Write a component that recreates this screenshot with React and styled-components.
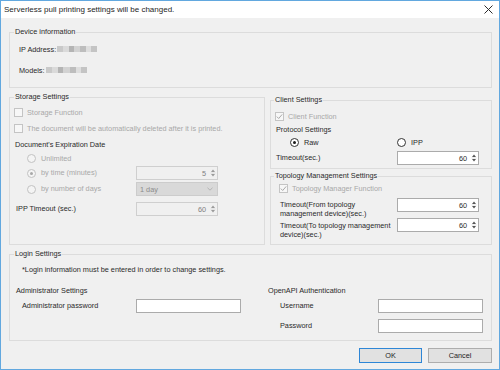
import React from "react";
import styled, { createGlobalStyle } from "styled-components";

const GlobalStyle = createGlobalStyle`
  html, body {
    margin: 0;
    padding: 0;
    background: #ffffff;
  }
  body {
    font-family: "Liberation Sans", Arial, sans-serif;
  }
`;

const Window = styled.div`
  width: 500px;
  height: 370px;
  box-sizing: border-box;
  border: 1px solid #62a8df;
  display: flex;
  flex-direction: column;
  background: #f0f0f0;
  color: #2a2a2a;
  font-family: "Liberation Sans", Arial, sans-serif;
  font-size: 7.3px;
  overflow: hidden;
`;

const TitleBar = styled.div`
  height: 17px;
  flex: none;
  background: #ffffff;
  display: flex;
  align-items: center;
  justify-content: space-between;
  padding: 0 6px 0 3px;
  font-size: 8px;
  color: #1e1e1e;
`;

const Body = styled.div`
  flex: 1;
  display: flex;
  flex-direction: column;
  padding: 9px 7px 0 8px;
`;

const Group = styled.fieldset`
  margin: ${(p) => p.$mt || 0}px 0 0;
  padding: 0;
  border: 1px solid #dcdcdc;
  min-width: 0;
  box-sizing: border-box;
  width: ${(p) => (p.$w ? `${p.$w}px` : "auto")};
  flex: ${(p) => (p.$grow ? 1 : "none")};
`;

const Legend = styled.legend`
  padding: 0 1px;
  margin-left: ${(p) => p.$ml ?? 4}px;
  line-height: 10px;
  height: 10px;
  color: #2a2a2a;
`;

const Content = styled.div`
  display: flex;
  flex-direction: column;
  padding: ${(p) => p.$pad};
`;

const Line = styled.div`
  display: flex;
  align-items: ${(p) => p.$align || "center"};
  height: ${(p) => p.$h || 10}px;
  margin-top: ${(p) => p.$mt || 0}px;
  padding-left: ${(p) => p.$pl || 0}px;
  color: ${(p) => (p.$disabled ? "#a8a8a8" : "inherit")};
  white-space: nowrap;
`;

const Label = styled.span`
  flex: none;
  width: ${(p) => p.$w}px;
  line-height: ${(p) => p.$lh || 10}px;
  margin-top: ${(p) => p.$mt || 0}px;
  white-space: nowrap;
`;

const Blur = styled.span`
  display: inline-block;
  width: ${(p) => p.$w}px;
  height: 6px;
  margin-left: 1px;
  background: linear-gradient(
    90deg,
    #c9c9c9 0 14%,
    #dadada 14% 30%,
    #b4b4b4 30% 42%,
    #d2d2d2 42% 58%,
    #bdbdbd 58% 72%,
    #dedede 72% 86%,
    #c4c4c4 86% 100%
  );
`;

const CheckBox = styled.span`
  flex: none;
  width: 9px;
  height: 9px;
  box-sizing: border-box;
  border: 1px solid #c4c4c4;
  background: #f7f7f7;
  margin-right: 4px;
  display: inline-flex;
  align-items: center;
  justify-content: center;
`;

const RadioDot = styled.span`
  flex: none;
  width: 9px;
  height: 9px;
  box-sizing: border-box;
  border-radius: 50%;
  border: 1px solid ${(p) => (p.$disabled ? "#c2c2c2" : "#333333")};
  background: ${(p) => (p.$disabled ? "#f4f4f4" : "#ffffff")};
  margin-right: 5px;
  display: inline-flex;
  align-items: center;
  justify-content: center;
  &::after {
    content: "";
    display: ${(p) => (p.$on ? "block" : "none")};
    width: 3px;
    height: 3px;
    border-radius: 50%;
    background: ${(p) => (p.$disabled ? "#a8a8a8" : "#1a1a1a")};
  }
`;

const RadioItem = styled.span`
  display: inline-flex;
  align-items: center;
  flex: none;
  width: ${(p) => (p.$w ? `${p.$w}px` : "auto")};
`;

const Field = styled.div`
  flex: none;
  width: ${(p) => p.$w || 82}px;
  height: 14px;
  box-sizing: border-box;
  border: 1px solid ${(p) => (p.$disabled ? "#cfcfcf" : "#ababab")};
  background: ${(p) => (p.$disabled ? "#f0f0f0" : "#ffffff")};
  color: ${(p) => (p.$disabled ? "#808080" : "#2a2a2a")};
  display: flex;
  align-items: center;
`;

const FieldValue = styled.span`
  flex: 1;
  text-align: right;
  padding-right: 2px;
`;

const Spin = styled.span`
  flex: none;
  width: 9px;
  height: 12px;
  display: flex;
  align-items: center;
  justify-content: center;
`;

const Combo = styled.div`
  flex: none;
  width: 82px;
  height: 14px;
  box-sizing: border-box;
  border: 1px solid #cccccc;
  background: #d9d9d9;
  color: #8c8c8c;
  display: flex;
  align-items: center;
  justify-content: space-between;
  padding: 0 4px 0 3px;
`;

const MiddleRow = styled.div`
  display: flex;
  align-items: stretch;
  gap: 5px;
  margin-top: 4px;
`;

const SideColumn = styled.div`
  flex: 1;
  display: flex;
  flex-direction: column;
  margin-top: 3px;
`;

const LoginColumns = styled.div`
  display: grid;
  grid-template-columns: 252px 1fr;
  margin-top: 11px;
  padding-left: 6px;
`;

const Column = styled.div`
  display: flex;
  flex-direction: column;
`;

const ButtonBar = styled.div`
  display: flex;
  justify-content: flex-end;
  gap: 6px;
  margin-top: 7px;
`;

const Button = styled.button`
  width: ${(p) => p.$w}px;
  height: 15px;
  box-sizing: border-box;
  padding: 0;
  border: 1px solid ${(p) => (p.$primary ? "#2e86d6" : "#adadad")};
  background: #e1e1e1;
  color: #1e1e1e;
  font-family: "Liberation Sans", Arial, sans-serif;
  font-size: 7.3px;
  line-height: 13px;
`;

const CloseIcon = () => (
  <svg width="9" height="9" viewBox="0 0 9 9">
    <path d="M0.5 0.5 L8.5 8.5 M8.5 0.5 L0.5 8.5" stroke="#2b2b2b" strokeWidth="1" />
  </svg>
);

const CheckMark = () => (
  <svg width="7" height="7" viewBox="0 0 7 7">
    <path d="M0.8 3.6 L2.7 5.5 L6.2 1.4" fill="none" stroke="#a9a9a9" strokeWidth="1" />
  </svg>
);

const SpinArrows = ({ disabled }) => (
  <svg width="6" height="10" viewBox="0 0 6 10">
    <path d="M1 4 L3 1.5 L5 4 Z M1 6 L3 8.5 L5 6 Z" fill={disabled ? "#9a9a9a" : "#555555"} />
    <path d="M0.5 5 H5.5" stroke="#d0d0d0" strokeWidth="0.6" />
  </svg>
);

const Chevron = () => (
  <svg width="6" height="4" viewBox="0 0 6 4">
    <path d="M0.5 0.8 L3 3.2 L5.5 0.8" fill="none" stroke="#a8a8a8" strokeWidth="0.8" />
  </svg>
);

const SpinField = ({ value, disabled }) => (
  <Field $disabled={disabled}>
    <FieldValue>{value}</FieldValue>
    <Spin>
      <SpinArrows disabled={disabled} />
    </Spin>
  </Field>
);

const Check = ({ checked, children }) => (
  <>
    <CheckBox>{checked && <CheckMark />}</CheckBox>
    {children}
  </>
);

export default function App() {
  return (
    <>
      <GlobalStyle />
      <Window>
        <TitleBar>
          <span>Serverless pull printing settings will be changed.</span>
          <CloseIcon />
        </TitleBar>

        <Body>
          <Group>
            <Legend>Device information</Legend>
            <Content $pad="7px 0 12px 9px">
              <Line>
                IP Address:<Blur $w={40} />
              </Line>
              <Line $mt={11}>
                Models:<Blur $w={41} />
              </Line>
            </Content>
          </Group>

          <MiddleRow>
            <Group $w={256}>
              <Legend>Storage Settings</Legend>
              <Content $pad="5px 0 28px 0">
                <Line $pl={4} $disabled>
                  <Check>Storage Function</Check>
                </Line>
                <Line $pl={4} $mt={6} $disabled>
                  <Check>The document will be automatically deleted after it is printed.</Check>
                </Line>
                <Line $pl={5} $mt={6}>
                  Document's Expiration Date
                </Line>
                <Line $pl={17} $h={14} $mt={2} $disabled>
                  <RadioDot $disabled />
                  Unlimited
                </Line>
                <Line $pl={17} $h={14} $mt={1} $disabled>
                  <RadioDot $disabled $on />
                  <Label $w={95}>by time (minutes)</Label>
                  <SpinField value="5" disabled />
                </Line>
                <Line $pl={17} $h={14} $mt={2} $disabled>
                  <RadioDot $disabled />
                  <Label $w={95}>by number of days</Label>
                  <Combo>
                    <span>1 day</span>
                    <Chevron />
                  </Combo>
                </Line>
                <Line $pl={6} $h={14} $mt={6}>
                  <Label $w={120}>IPP Timeout (sec.)</Label>
                  <SpinField value="60" disabled />
                </Line>
              </Content>
            </Group>

            <SideColumn>
              <Group>
                <Legend $ml={3}>Client Settings</Legend>
                <Content $pad="6px 0 3px 0">
                  <Line $pl={4} $disabled>
                    <Check checked>Client Function</Check>
                  </Line>
                  <Line $pl={5} $mt={3}>
                    Protocol Settings
                  </Line>
                  <Line $pl={19} $h={14} $mt={1}>
                    <RadioItem $w={107}>
                      <RadioDot $on />
                      Raw
                    </RadioItem>
                    <RadioItem>
                      <RadioDot />
                      IPP
                    </RadioItem>
                  </Line>
                  <Line $pl={5} $h={14} $mt={2}>
                    <Label $w={121}>Timeout(sec.)</Label>
                    <SpinField value="60" />
                  </Line>
                </Content>
              </Group>

              <Group $mt={2} $grow>
                <Legend $ml={3}>Topology Management Settings</Legend>
                <Content $pad="2px 0 0 0">
                  <Line $pl={8} $disabled>
                    <Check checked>Topology Manager Function</Check>
                  </Line>
                  <Line $pl={9} $h={20} $mt={5} $align="flex-start">
                    <Label $w={117} $lh={9} $mt={1.5}>
                      Timeout(From topology
                      <br />
                      management device)(sec.)
                    </Label>
                    <SpinField value="60" />
                  </Line>
                  <Line $pl={9} $h={20} $align="flex-start">
                    <Label $w={117} $lh={9} $mt={3}>
                      Timeout(To topology management
                      <br />
                      device)(sec.)
                    </Label>
                    <SpinField value="60" />
                  </Line>
                </Content>
              </Group>
            </SideColumn>
          </MiddleRow>

          <Group $mt={4}>
            <Legend>Login Settings</Legend>
            <Content $pad="5px 0 7px 0">
              <Line $pl={12}>*Login information must be entered in order to change settings.</Line>
              <LoginColumns>
                <Column>
                  <Line>Administrator Settings</Line>
                  <Line $pl={6} $h={14} $mt={4}>
                    <Label $w={114}>Administrator password</Label>
                    <Field $w={105} />
                  </Line>
                </Column>
                <Column>
                  <Line>OpenAPI Authentication</Line>
                  <Line $pl={12} $h={14} $mt={4}>
                    <Label $w={98}>Username</Label>
                    <Field $w={105} />
                  </Line>
                  <Line $pl={12} $h={14} $mt={6}>
                    <Label $w={98}>Password</Label>
                    <Field $w={105} />
                  </Line>
                </Column>
              </LoginColumns>
            </Content>
          </Group>

          <ButtonBar>
            <Button $w={63} $primary>
              OK
            </Button>
            <Button $w={64}>Cancel</Button>
          </ButtonBar>
        </Body>
      </Window>
    </>
  );
}
